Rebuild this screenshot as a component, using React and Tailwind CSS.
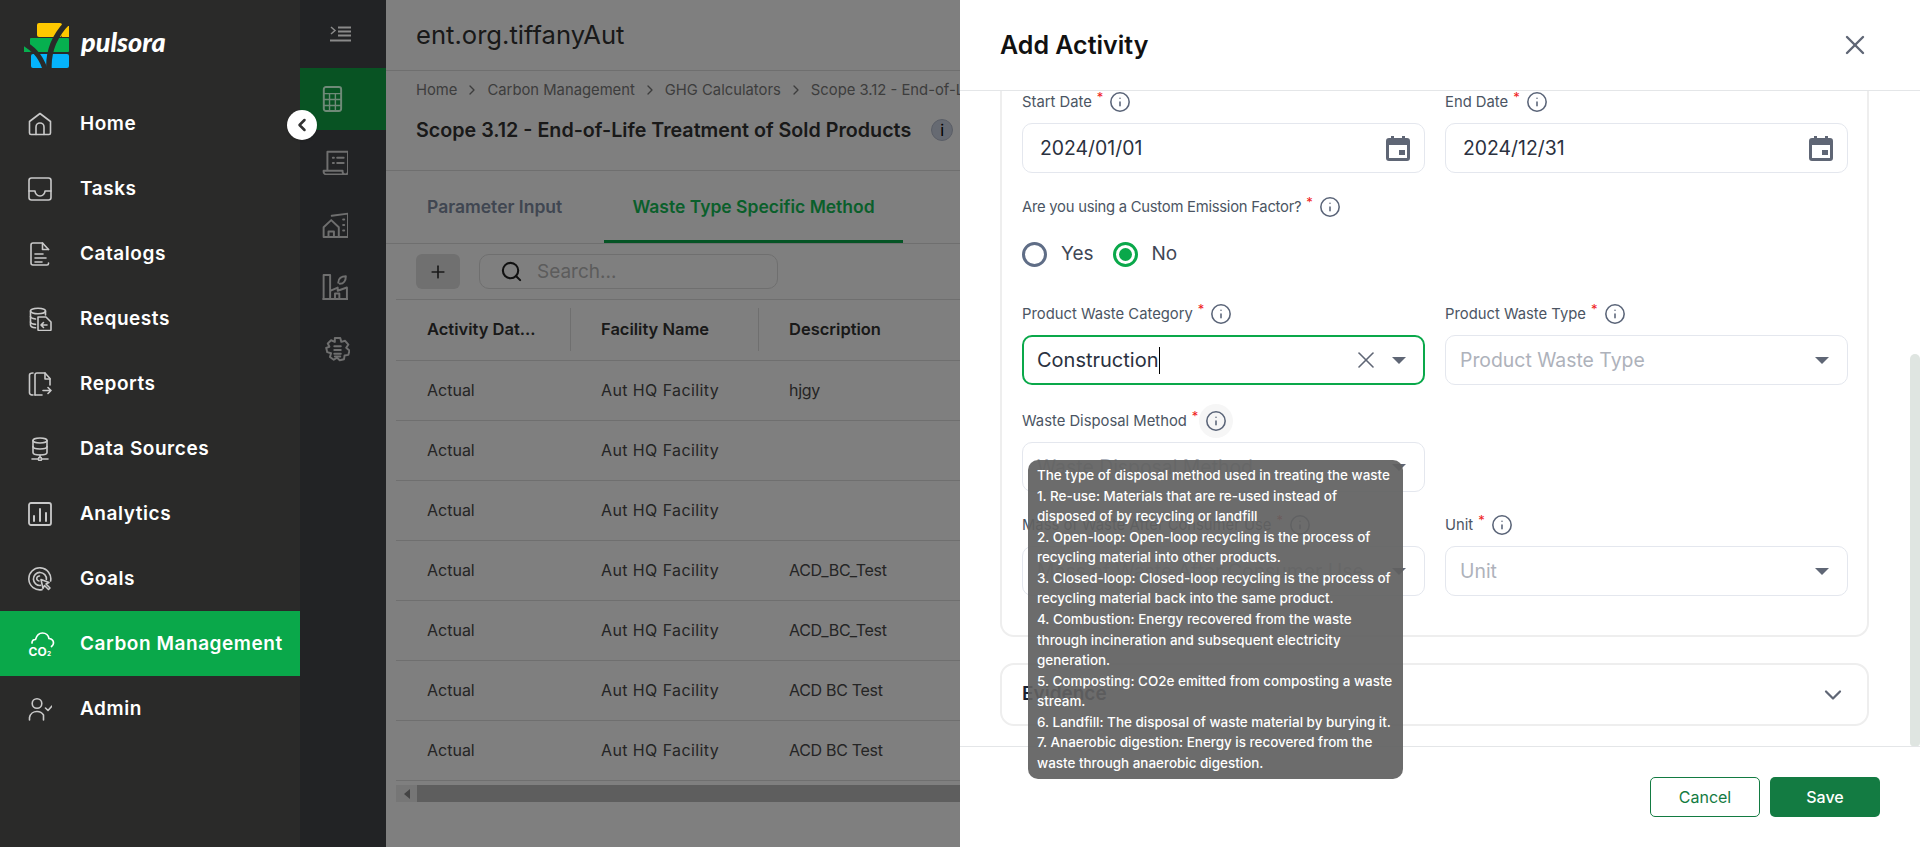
import React from 'react';
import { ChevronLeft, ChevronDown, ChevronRight, Search, Plus, X, Info } from 'lucide-react';

const Glyph = ({ size = 24, stroke = 1.6, className = '', children }) => (
    <svg width={size} height={size} viewBox="0 0 24 24" fill="none" stroke="currentColor" strokeWidth={stroke} strokeLinecap="round" strokeLinejoin="round" className={className}>
        {children}
    </svg>
);

const HomeIcon = () => (
    <Glyph>
        <path d="M1.500 21V9.500L12 1.500l10.500 8V21a1.500 1.500 0 0 1-1.500 1.500H3A1.500 1.500 0 0 1 1.500 21z" />
        <path d="M8 22.500V15a4 4 0 0 1 8 0v7.500" />
    </Glyph>
);
const TasksIcon = () => (
    <Glyph>
        <rect x="1" y="1" width="22" height="22" rx="2.500" />
        <path d="M1 14h6a5 5 0 0 0 10 0h6" />
    </Glyph>
);
const CatalogIcon = () => (
    <Glyph>
        <path d="M20.500 21v.5a1.500 1.500 0 0 1-1.500 1.500H5a2 2 0 0 1-2-2V3a2 2 0 0 1 2-2h9.500l6 6.500" />
        <path d="M14.500 1v6.500h6" />
        <path d="M7 12h8M7 16h11M7 20h7" />
    </Glyph>
);
const RequestIcon = () => (
    <Glyph>
        <ellipse cx="10" cy="4" rx="7.500" ry="2.800" />
        <path d="M2.500 4v14c0 1.500 2 2.500 5 2.800M17.500 4v4" />
        <path d="M2.500 9.500c0 1 2 2 5 2.500M2.500 15c0 1 2 2 5 2.400" />
        <path d="M10 10h8l5 5v7.500a1 1 0 0 1-1 1H11a1 1 0 0 1-1-1z" />
        <path d="M19 18h-5.500M15.500 15.500 13 18l2.500 2.500" />
    </Glyph>
);
const ReportIcon = () => (
    <Glyph>
        <path d="M5 23c-2 0-3.500-.5-3.500-2V3C1.500 1.500 3 1 5 1" />
        <path d="M7 23V3a2 2 0 0 1 2-2h8l5 5.500V13" />
        <path d="M17 1v6h5M7 23h7" />
        <path d="M15 18.500h8M20 15.500l3 3-3 3" />
    </Glyph>
);
const DataIcon = () => (
    <Glyph>
        <ellipse cx="12" cy="3.500" rx="7" ry="2.500" />
        <path d="M5 3.500v12c0 1.500 3 2.500 7 2.500s7-1 7-2.500v-12" />
        <path d="M5 9.500c0 1.500 3 2.500 7 2.500s7-1 7-2.500" />
        <path d="M12 18v2M4 22h6M14 22h6" />
        <circle cx="12" cy="22" r="1.600" />
    </Glyph>
);
const ChartIcon = () => (
    <Glyph>
        <rect x="1" y="1" width="22" height="22" rx="2" strokeWidth="1.800" />
        <path d="M6 14v5M12 7v12M18 11v8" strokeWidth="2" />
    </Glyph>
);
const GoalIcon = () => (
    <Glyph>
        <path d="M14 22.600A11 11 0 1 1 22.600 14" />
        <path d="M12.500 18.400A6.500 6.500 0 1 1 18.400 12.500" />
        <path d="M11 14a2.500 2.500 0 0 1 .5-5" />
        <path d="m13 12.500 8 3-3 1.500 4 4-1.500 1.500-4-4-1.500 3z" />
    </Glyph>
);
const CarbonIcon = () => (
    <svg width="26" height="26" viewBox="0 0 26 26" fill="none" className="text-white overflow-visible">
        <path d="M4 12c0-2 1.500-3.500 3.500-3.500C8.500 5 11 2 14.500 2c3.500 0 6 2.500 6.500 5.500 2.500.3 4.500 2 4.500 4.500 0 1.500-.7 2.500-2 3.500" stroke="currentColor" strokeWidth="1.700" strokeLinecap="round" />
        <text x="0.500" y="25" fill="currentColor" fontSize="12" fontWeight="700" fontFamily="Inter, sans-serif">CO</text>
        <text x="19" y="25" fill="currentColor" fontSize="6.500" fontWeight="700" fontFamily="Inter, sans-serif">2</text>
    </svg>
);
const AdminIcon = () => (
    <Glyph>
        <circle cx="9" cy="6.500" r="4.800" />
        <path d="M1.500 23v-2.500a7.500 7.500 0 0 1 7.500-6 7.500 7.500 0 0 1 6.500 3.500V23" />
        <path d="m17.500 11 2.500 2.500 4-4.500" />
    </Glyph>
);

const CalcIcon = () => (
    <Glyph size={26} stroke={1.800}>
        <rect x="3.500" y="1" width="16" height="22" rx="2" />
        <path d="M3.500 7h16M3.500 12.500h16M3.500 18h16M8.800 7v16M14.200 7v16" strokeWidth="1.300" />
    </Glyph>
);
const LedgerIcon = () => (
    <Glyph size={26} stroke={1.800}>
        <path d="M5 20V2.500h19V21a2.500 2.500 0 0 1-5 0v-1H1.500v1A2.500 2.500 0 0 0 4 23.500h17" />
        <path d="M10 8h1M10 13h1M14 8h6M14 13h6" />
    </Glyph>
);
const BuildingIcon = () => (
    <Glyph size={26} stroke={1.800}>
        <path d="M1.500 23V14l7-6.500 7 6.500v9z" />
        <path d="M6 23v-5h5v5" />
        <path d="M9 3.500 24 1.500V23h-8.500" />
        <path d="M19.500 7h1M19.500 12h1M19.500 17h1" />
    </Glyph>
);
const FactoryIcon = () => (
    <Glyph size={26} stroke={1.800}>
        <path d="M1.500 1h6v22h-6zM1 23h23M7.500 15.500l7-3v3l8.500-3V23" />
        <path d="M12 23v-5h4v5" />
        <path d="M15 8c0-4 3-6 7-6 0 4-2 7-5.500 7" />
    </Glyph>
);
const GearIcon = () => (
    <Glyph size={26} stroke={1.800}>
        <path d="M10 1h5l1 3.500 3.500-1 3 3.500-2 3 3 2.500-1 4-3.500.5-.5 3.500-4 1-2.500-2.500-3 2-3.500-2.500 1-3.500-3.500-1-1-4L5 9 3.500 6l3-3L10 4.500z" />
        <path d="M9.500 8.500h6M9.500 12h6M9.500 15.500h6M10 18h5" />
    </Glyph>
);
const CollapseIcon = () => (
    <svg width="21" height="16" viewBox="0 0 21 16" fill="none" stroke="currentColor" strokeWidth="2.200">
        <path d="m1 1 4 3.500L1 8" strokeWidth="1.500" />
        <path d="M8 1.500h13M8 5.500h13M8 9.500h13M0 14.500h21" />
    </svg>
);

const Logo = () => (
    <svg width="46" height="46" viewBox="0 0 46 46">
        <rect x="13" y="1" width="25" height="14" rx="2" fill="#ffc800" />
        <rect x="38" y="4" width="7" height="11" fill="#ffc800" />
        <rect x="6" y="16" width="39" height="14" rx="1" fill="#06b04f" />
        <rect x="0" y="24" width="6" height="6" fill="#06b04f" />
        <rect x="7" y="32" width="38" height="14" rx="2" fill="#05b3fb" />
        <path d="M-2 20 C 8 26 16 32 21 47" stroke="#2a2a29" strokeWidth="5" fill="none" />
        <path d="M44 0 C 32 12 24 26 25 47" stroke="#2a2a29" strokeWidth="5.500" fill="none" />
    </svg>
);

const navItems = [
    { label: 'Home', icon: <HomeIcon /> },
    { label: 'Tasks', icon: <TasksIcon /> },
    { label: 'Catalogs', icon: <CatalogIcon /> },
    { label: 'Requests', icon: <RequestIcon /> },
    { label: 'Reports', icon: <ReportIcon /> },
    { label: 'Data Sources', icon: <DataIcon /> },
    { label: 'Analytics', icon: <ChartIcon /> },
    { label: 'Goals', icon: <GoalIcon /> },
    { label: 'Carbon Management', icon: <CarbonIcon />, active: true },
    { label: 'Admin', icon: <AdminIcon /> },
];

const rows = [
    ['Actual', 'Aut HQ Facility', 'hjgy'],
    ['Actual', 'Aut HQ Facility', ''],
    ['Actual', 'Aut HQ Facility', ''],
    ['Actual', 'Aut HQ Facility', 'ACD_BC_Test'],
    ['Actual', 'Aut HQ Facility', 'ACD_BC_Test'],
    ['Actual', 'Aut HQ Facility', 'ACD BC Test'],
    ['Actual', 'Aut HQ Facility', 'ACD BC Test'],
];

const tooltipLines = [
    'The type of disposal method used in treating the waste',
    '1. Re-use: Materials that are re-used instead of',
    'disposed of by recycling or landfill',
    '2. Open-loop: Open-loop recycling is the process of',
    'recycling material into other products.',
    '3. Closed-loop: Closed-loop recycling is the process of',
    'recycling material back into the same product.',
    '4. Combustion: Energy recovered from the waste',
    'through incineration and subsequent electricity',
    'generation.',
    '5. Composting: CO2e emitted from composting a waste',
    'stream.',
    '6. Landfill: The disposal of waste material by burying it.',
    '7. Anaerobic digestion: Energy is recovered from the',
    'waste through anaerobic digestion.',
];

const Label = ({ text, hovered, tight }) => (
    <div className={`flex items-center h-[22px] text-[14.8px] leading-[22px] text-[#4b5563] whitespace-nowrap ${tight ? 'tracking-[-0.25px]' : ''}`}>
        <span>{text}</span>
        <span className="text-[#ef2020] text-[13px] leading-none ml-[5px] -mt-[10px]">*</span>
        {hovered ? (
            <span className="flex items-center justify-center w-[34px] h-[34px] ml-[1px] rounded-full bg-[#f6f6f6]">
                <Info size={22} strokeWidth={1.700} className="text-[#5a6478]" />
            </span>
        ) : (
            <Info size={22} strokeWidth={1.700} className="text-[#5a6478] ml-[6px]" />
        )}
    </div>
);

const Caret = () => (
    <span className="w-0 h-0 border-x-[7px] border-x-transparent border-t-[7px] border-t-[#5f6675]" />
);

const Field = ({ label, value, placeholder, focused, clearable, date, hovered }) => (
    <div className="w-[403px]">
        <Label text={label} hovered={hovered} />
        <div className={`mt-[10px] h-[50px] rounded-[10px] bg-white flex items-center justify-between ${focused ? 'border-2 border-[#0aa84a] pl-[13px] pr-[17px]' : 'border border-[#e4e7ee]'} ${date ? 'pl-[17px] pr-[14px]' : ''} ${!date && !focused ? 'pl-[14px] pr-[18px]' : ''}`}>
            {value ? (
                <span className={`${focused ? 'text-[20px]' : 'text-[19.4px] pt-[2px]'} text-[#2a3140] flex items-center`}>
                    {value}
                    {focused && <span className="w-px h-[27px] bg-black" />}
                </span>
            ) : (
                <span className="text-[19.4px] pt-[1px] text-[#aeb2bb] whitespace-nowrap">{placeholder}</span>
            )}
            {date ? (
                <svg width="24" height="26" viewBox="0 0 24 26" fill="#5f6675">
                    <path d="M5 1h3v2h8V1h3v2h2a3 3 0 0 1 3 3v17a3 3 0 0 1-3 3H3a3 3 0 0 1-3-3V6a3 3 0 0 1 3-3h2zM3 10v13h18V10z" />
                    <rect x="13" y="15" width="6" height="5" />
                </svg>
            ) : (
                <span className="flex items-center gap-[12px]">
                    {clearable && <X size={28} strokeWidth={1.400} className="text-[#5f6675]" />}
                    <Caret />
                </span>
            )}
        </div>
    </div>
);

const Radio = ({ label, checked }) => (
    <div className="flex items-center">
        <span className={`w-[25px] h-[25px] rounded-full border-[3px] flex items-center justify-center ${checked ? 'border-[#0aa84a]' : 'border-[#5f6d86]'}`}>
            {checked && <span className="w-[13px] h-[13px] rounded-full bg-[#0aa84a]" />}
        </span>
        <span className="ml-[14px] text-[19px] text-[#3f4756]">{label}</span>
    </div>
);

const App = () => {
    return (
        <div className="flex w-[1920px] h-[847px] overflow-hidden font-['Inter',sans-serif] bg-white">
            {/* main nav */}
            <aside className="relative z-10 w-[300px] shrink-0 bg-[#2a2a29]">
                <div className="h-[91px] pl-[24px] pt-[22px] flex items-start gap-[10px]">
                    <Logo />
                    <span className="font-['Lato',sans-serif] italic font-black text-white text-[27px] leading-[42px] -mt-[1px] ml-[1px]">pulsora</span>
                </div>
                <nav>
                    {navItems.map((item) => (
                        <div key={item.label} className={`h-[65px] flex items-center pl-[28px] ${item.active ? 'bg-[#0aa84a]' : ''}`}>
                            <span className={`w-[52px] shrink-0 ${item.active ? 'text-white' : 'text-[#c9c9c9]'}`}>{item.icon}</span>
                            <span className="text-white text-[19px] font-semibold tracking-[0.55px] whitespace-nowrap pt-[2px]">{item.label}</span>
                        </div>
                    ))}
                </nav>
                <button className="absolute left-[287px] top-[110px] z-20 w-[30px] h-[30px] rounded-full bg-white shadow flex items-center justify-center text-[#333]">
                    <ChevronLeft size={20} strokeWidth={3} />
                </button>
            </aside>

            {/* sub nav */}
            <div className="w-[86px] shrink-0 bg-[#222325] text-[#6f6f6f]">
                <div className="h-[68px] flex items-center justify-center pr-[5px] text-[#8a8a8a]">
                    <CollapseIcon />
                </div>
                <div className="h-[62px] bg-[#085323] pl-[20px] flex items-center text-[#6f8a78]"><CalcIcon /></div>
                <div className="h-[63px] pl-[22px] flex items-center"><LedgerIcon /></div>
                <div className="h-[63px] pl-[22px] flex items-center"><BuildingIcon /></div>
                <div className="h-[62px] pl-[22px] flex items-center"><FactoryIcon /></div>
                <div className="h-[63px] pl-[24px] flex items-center"><GearIcon /></div>
            </div>

            {/* page behind the drawer */}
            <main className="relative w-[574px] shrink-0 overflow-hidden bg-white">
                <div className="w-[1100px]">
                    <div className="h-[71px] pl-[30px] flex items-center border-b border-[#dedede] text-[25.6px] text-[#333] w-[574px]">ent.org.tiffanyAut</div>
                    <div className="h-[100px] pl-[30px] border-b border-[#dedede] w-[574px] overflow-hidden">
                        <div className="flex items-center h-[38px] text-[14.800px] text-[#7a7a7a] whitespace-nowrap">
                            <span>Home</span>
                            <ChevronRight size={16} className="mx-[7px] shrink-0" />
                            <span>Carbon Management</span>
                            <ChevronRight size={16} className="mx-[7px] shrink-0" />
                            <span>GHG Calculators</span>
                            <ChevronRight size={16} className="mx-[7px] shrink-0" />
                            <span>Scope 3.12 - End-of-Life Treatment of Sold Products</span>
                        </div>
                        <div className="flex items-center mt-[9px] whitespace-nowrap">
                            <span className="text-[19.7px] leading-[24px] font-semibold text-[#333]">Scope 3.12 - End-of-Life Treatment of Sold Products</span>
                            <span className="ml-[20px] w-[22px] h-[22px] shrink-0 rounded-full bg-[#cdd4e4] border border-[#b4bccd] flex items-center justify-center text-[16px] text-black">i</span>
                        </div>
                    </div>
                    <div className="h-[73px] flex items-stretch border-b border-[#dedede] pl-[9px] w-[574px]">
                        <div className="w-[209px] pl-[32px] flex items-center text-[17.5px] font-semibold text-[#808ca3] whitespace-nowrap">Parameter Input</div>
                        <div className="w-[299px] flex items-center justify-center pt-[3px] text-[17.5px] font-semibold text-[#14bf57] border-b-[3px] border-[#0aa84a] whitespace-nowrap">Waste Type Specific Method</div>
                    </div>
                    <div className="h-[55px] flex items-start pt-[10px] pl-[30px]">
                        <button className="w-[44px] h-[35px] rounded-[6px] bg-[#e0e0e0] flex items-center justify-center text-[#333]"><Plus size={20} /></button>
                        <div className="ml-[19px] w-[299px] h-[35px] rounded-[10px] border border-[#dedede] flex items-center pl-[20px]">
                            <Search size={23} strokeWidth={2.200} className="text-[#222]" />
                            <span className="ml-[14px] pt-[2px] text-[19px] text-[#b9b9b9]">Search...</span>
                        </div>
                    </div>
                    <div className="ml-[10px] border-t border-[#dedede]">
                        <div className="h-[61px] grid grid-cols-[175px_188px_1fr] items-center border-b border-[#dedede] text-[16.5px] font-semibold text-[#333] pb-[2px]">
                            <div className="h-[43px] flex items-center pl-[31px] border-r border-[#dedede]">Activity Dat...</div>
                            <div className="h-[43px] flex items-center pl-[30px] border-r border-[#dedede]">Facility Name</div>
                            <div className="h-[43px] flex items-center pl-[30px]">Description</div>
                        </div>
                        {rows.map((row, i) => (
                            <div key={i} className="h-[60px] grid grid-cols-[175px_188px_1fr] items-center border-b border-[#dedede] text-[16px] text-[#4a4a4a] pb-[2px]">
                                <div className="pl-[31px]">{row[0]}</div>
                                <div className="pl-[30px] tracking-[0.4px]">{row[1]}</div>
                                <div className="pl-[30px] tracking-[-0.3px]">{row[2]}</div>
                            </div>
                        ))}
                    </div>
                    <div className="ml-[10px] mt-[4px] h-[17px] flex bg-[#ececec]">
                        <div className="w-[21px] flex items-center justify-center">
                            <span className="w-0 h-0 border-y-[5px] border-y-transparent border-r-[6px] border-r-[#888]" />
                        </div>
                        <div className="flex-1 bg-[#bcbcbc]" />
                    </div>
                </div>
                <div className="absolute inset-0 bg-black/50" />
            </main>

            {/* drawer */}
            <section className="relative flex-1 min-w-0 flex flex-col bg-white">
                <header className="h-[91px] shrink-0 flex items-center justify-between pl-[40px] pr-[49px] border-b border-[#e4e6e8]">
                    <h2 className="text-[25px] font-semibold text-[#111] pt-[2px]">Add Activity</h2>
                    <X size={32} strokeWidth={1.800} className="text-[#5f6675]" />
                </header>
                <div className="relative h-[655px] shrink-0 overflow-hidden pl-[40px] pr-[51px]">
                    <div className="h-[546px] border-x-2 border-b-2 border-[#eeeeee] rounded-b-[14px] pl-[20px] pr-[19px]">
                        <div className="flex gap-[20px]">
                            <Field label="Start Date" value="2024/01/01" date />
                            <Field label="End Date" value="2024/12/31" date />
                        </div>
                        <div className="mt-[23px]"><Label text="Are you using a Custom Emission Factor?" tight /></div>
                        <div className="mt-[23px] flex gap-[19px] h-[27px] items-center">
                            <Radio label="Yes" />
                            <Radio label="No" checked />
                        </div>
                        <div className="mt-[35px] flex gap-[20px]">
                            <Field label="Product Waste Category" value="Construction" focused clearable />
                            <Field label="Product Waste Type" placeholder="Product Waste Type" />
                        </div>
                        <div className="mt-[25px]">
                            <Field label="Waste Disposal Method" placeholder="Waste Disposal Method" hovered />
                        </div>
                        <div className="mt-[22px] flex gap-[20px]">
                            <Field label="Mass of Waste After Consumer Use" placeholder="Mass of Waste After Consumer Use" />
                            <Field label="Unit" placeholder="Unit" />
                        </div>
                    </div>
                    <div className="mt-[26px] h-[63px] border-2 border-[#eeeeee] rounded-[14px] flex items-center justify-between pl-[20px] pr-[20px]">
                        <span className="text-[19px] font-semibold text-[#1b2333]">Evidence</span>
                        <ChevronDown size={28} strokeWidth={1.900} className="text-[#5f6675]" />
                    </div>
                    <div className="absolute right-0 top-[263px] w-[10px] h-[392px] rounded-t-[6px] rounded-b-[4px] bg-[#dfe5e1]" />
                </div>
                <footer className="flex-1 border-t border-[#e4e6e8] flex items-start justify-end gap-[10px] pt-[30px] pr-[40px]">
                    <button className="w-[110px] h-[40px] rounded-[5px] border border-[#137b42] text-[#137b42] text-[16px]">Cancel</button>
                    <button className="w-[110px] h-[40px] rounded-[5px] bg-[#137b42] text-white text-[16px] font-medium">Save</button>
                </footer>

                {/* tooltip */}
                <div className="absolute left-[68px] top-[460px] w-[375px] h-[319px] z-20 rounded-[10px] bg-[#616161]/[0.93] pl-[9px] pt-[5px] text-[13.45px] leading-[20.57px] font-medium text-white whitespace-nowrap">
                    {tooltipLines.map((line) => (
                        <div key={line}>{line}</div>
                    ))}
                </div>
            </section>
        </div>
    );
};

export default App;
